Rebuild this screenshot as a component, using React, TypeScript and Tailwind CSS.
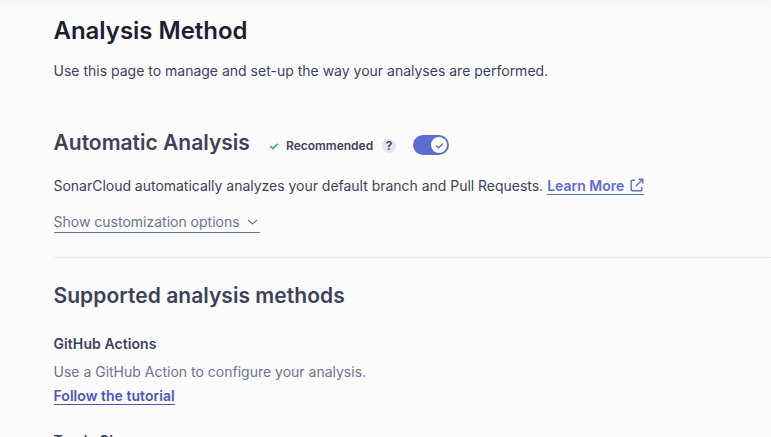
function Check({ className }: { className: string }) {
  return (
    <svg className={className} viewBox="0 0 10 10" fill="none" stroke="currentColor" strokeWidth="1.6">
      <path d="M1.2 5 3.9 7.6 8.9 2.7" />
    </svg>
  );
}

export default function App() {
  return (
    <main className="flex h-[437px] w-[771px] flex-col items-start overflow-hidden bg-[#fcfcfc] bg-linear-to-b from-[#f7f7f7] to-[#fcfcfc] to-[12px] pl-[53.5px] font-['Inter',sans-serif] text-[14px] leading-5 text-[#3c425a] *:shrink-0">
      <h1 className="mt-[15px] text-[24px] leading-8 font-semibold tracking-[-0.02px] text-[#1b1f33]">Analysis Method</h1>
      <p className="mt-[14px]">Use this page to manage and set-up the way your analyses are performed.</p>
      <div className="mt-[46px] flex h-8 items-center">
        <h2 className="w-[215px] text-[21px] leading-7 font-semibold">Automatic Analysis</h2>
        <Check className="mt-[5px] h-[10px] w-[10px] text-[#20b86c]" />
        <span className="mt-[5px] ml-[7.5px] w-[96px] text-[12px] font-semibold">Recommended</span>
        <span className="mt-[5px] flex h-[14px] w-[14px] items-center justify-center rounded-full bg-[#e1e6f3] text-[12px] leading-none font-semibold">?</span>
        <span className="mt-[4px] ml-[17px] flex h-5 w-9 items-center justify-end rounded-full bg-[#5d6cd0] pr-[2px]">
          <span className="flex h-4 w-4 items-center justify-center rounded-full bg-white">
            <Check className="h-[9px] w-[9px] text-[#5d6cd0]" />
          </span>
        </span>
      </div>
      <p className="mt-[17px] flex">
        <span className="tracking-[-0.02px]">SonarCloud automatically analyzes your default branch and Pull Requests.</span>
        <a href="#learn" className="ml-1 flex h-[19px] border-b border-[#5d6cd0] font-semibold text-[#5d6cd0]">
          Learn More
          <svg className="mt-[2px] ml-[5.5px] h-[14px] w-[14px]" viewBox="0 0 14 14" fill="none" stroke="currentColor" strokeWidth="1.4">
            <path d="M5 2.2H2.2Q1.2 2.2 1.2 3.2v8.6q0 1 1 1h8.6q1 0 1-1V8.8M8.5 1.2h4.3v4.3M12.5 1.5 6 8" />
          </svg>
        </a>
      </p>
      <button className="mt-[16px] flex h-[21px] border-b border-[#6a7590] text-[#6a7590]">
        Show customization options
        <svg className="mt-[5px] mr-[2px] ml-[7px] h-[10px] w-[11px]" viewBox="0 0 11 10" fill="none" stroke="currentColor" strokeWidth="1.1">
          <path d="m1 3 4.5 4L10 3" />
        </svg>
      </button>
      <hr className="mt-[24px] w-full border-[#ebebeb]" />
      <h2 className="mt-[24px] text-[21px] leading-7 font-semibold tracking-[0.04px]">Supported analysis methods</h2>
      <h3 className="mt-[24px] font-semibold tracking-[0.08px]">GitHub Actions</h3>
      <p className="mt-2 text-[#6a7590]">Use a GitHub Action to configure your analysis.</p>
      <a href="#github" className="mt-1 h-[19px] border-b border-[#4b56bb] font-semibold tracking-[0.04px] text-[#4b56bb]">Follow the tutorial</a>
      <h3 className="mt-[26px] font-semibold tracking-[0.08px]">Travis CI</h3>
    </main>
  );
}
